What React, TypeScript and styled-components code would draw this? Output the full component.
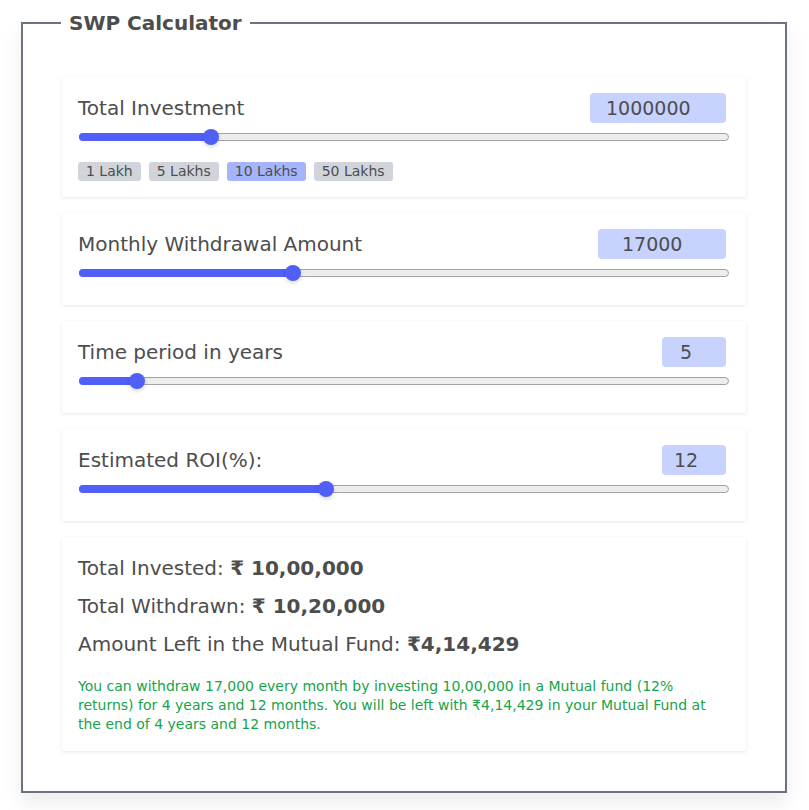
import styled, { createGlobalStyle } from 'styled-components'

const GlobalStyle = createGlobalStyle`
	html, body {
		margin: 0;
		padding: 0;
		background: #fff;
	}
	body {
		font-family: 'DejaVu Sans', 'Noto Sans', sans-serif;
		color: #4d4d4d;
	}
`

const Page = styled.div`
	padding: 11px 22px 17px 21px;
`

const Frame = styled.fieldset`
	margin: 0;
	border: 2px solid #6b7280;
	padding: 42px 39px 40px 39px;
	box-shadow: 0 10px 20px rgba(0, 0, 0, 0.08);
	display: flex;
	flex-direction: column;
	gap: 16px;
`

const Legend = styled.legend`
	font-size: 20px;
	font-weight: bold;
	color: #4d4d4d;
	padding: 0 8px;
	margin-left: -1px;
	line-height: 24px;
`

const Card = styled.div<{ $top?: number; $bottom?: number }>`
	background: #fff;
	box-shadow: 0 1px 3px rgba(0, 0, 0, 0.1);
	padding: ${({ $top = 16 }) => $top}px 16px ${({ $bottom = 24 }) => $bottom}px 16px;
`

const Row = styled.div`
	display: flex;
	justify-content: space-between;
	align-items: center;
	height: 30px;
`

const Label = styled.span`
	font-size: 20px;
	color: #4d4d4d;
`

const ValueBox = styled.div<{ $w: number; $pad: number }>`
	width: ${({ $w }) => $w}px;
	height: 30px;
	box-sizing: border-box;
	padding-left: ${({ $pad }) => $pad}px;
	margin-right: 4px;
	background: #c7d2fe;
	border-radius: 4px;
	font-size: 19px;
	line-height: 30px;
	color: #4d4d4d;
`

const Track = styled.div`
	position: relative;
	margin: 6px 0 0 1px;
	width: 650px;
	height: 16px;
`

const Rail = styled.div`
	position: absolute;
	left: 0;
	right: 0;
	top: 4px;
	height: 8px;
	box-sizing: border-box;
	border: 1px solid #a3a3a3;
	background: #ededed;
	border-radius: 4px;
`

const Fill = styled.div`
	position: absolute;
	left: 0;
	top: 4px;
	height: 8px;
	background: #4f5ff7;
	border-radius: 4px;
`

const Thumb = styled.div`
	position: absolute;
	top: 0;
	width: 16px;
	height: 16px;
	margin-left: -8px;
	border-radius: 50%;
	background: #4f5ff7;
	box-shadow: 0 2px 4px rgba(0, 0, 0, 0.15);
`

const Chips = styled.div`
	display: flex;
	gap: 8px;
	margin-top: 17px;
`

const Chip = styled.span<{ $active?: boolean }>`
	height: 19px;
	line-height: 19px;
	padding: 0 8px;
	font-size: 14px;
	border-radius: 3px;
	color: #4d4d4d;
	background: ${({ $active }) => ($active ? '#a5b4fc' : '#d1d5db')};
`

const Line = styled.div`
	font-size: 20px;
	line-height: 28px;
	color: #4d4d4d;
	& + & {
		margin-top: 10px;
	}
	b {
		font-weight: bold;
	}
`

const Note = styled.p`
	margin: 19px 0 0 0;
	font-size: 14px;
	line-height: 19px;
	color: #16a34a;
`

const Slider = ({ pct }: { pct: number }) => (
	<Track>
		<Rail />
		<Fill style={{ width: `${pct}%` }} />
		<Thumb style={{ left: `${pct}%` }} />
	</Track>
)

const inputs = [
	{ label: 'Total Investment', value: '1000000', w: 136, pad: 16, pct: 20.3, chips: true },
	{ label: 'Monthly Withdrawal Amount', value: '17000', w: 128, pad: 24, pct: 32.9 },
	{ label: 'Time period in years', value: '5', w: 64, pad: 18, pct: 8.9 },
	{ label: 'Estimated ROI(%):', value: '12', w: 64, pad: 12, pct: 38 },
]

const presets = ['1 Lakh', '5 Lakhs', '10 Lakhs', '50 Lakhs']

export default function App() {
	return (
		<Page>
			<GlobalStyle />
			<Frame>
				<Legend>SWP Calculator</Legend>
				{inputs.map((f) => (
					<Card key={f.label} $bottom={f.chips ? 16 : 24}>
						<Row>
							<Label>{f.label}</Label>
							<ValueBox $w={f.w} $pad={f.pad}>
								{f.value}
							</ValueBox>
						</Row>
						<Slider pct={f.pct} />
						{f.chips && (
							<Chips>
								{presets.map((p) => (
									<Chip key={p} $active={p === '10 Lakhs'}>
										{p}
									</Chip>
								))}
							</Chips>
						)}
					</Card>
				))}
				<Card $top={17} $bottom={17}>
					<Line>
						Total Invested: <b>₹ 10,00,000</b>
					</Line>
					<Line>
						Total Withdrawn: <b>₹ 10,20,000</b>
					</Line>
					<Line>
						Amount Left in the Mutual Fund: <b>₹4,14,429</b>
					</Line>
					<Note>
						You can withdraw 17,000 every month by investing 10,00,000 in a Mutual fund (12%
						returns) for 4 years and 12 months. You will be left with ₹4,14,429 in your Mutual
						Fund at the end of 4 years and 12 months.
					</Note>
				</Card>
			</Frame>
		</Page>
	)
}
